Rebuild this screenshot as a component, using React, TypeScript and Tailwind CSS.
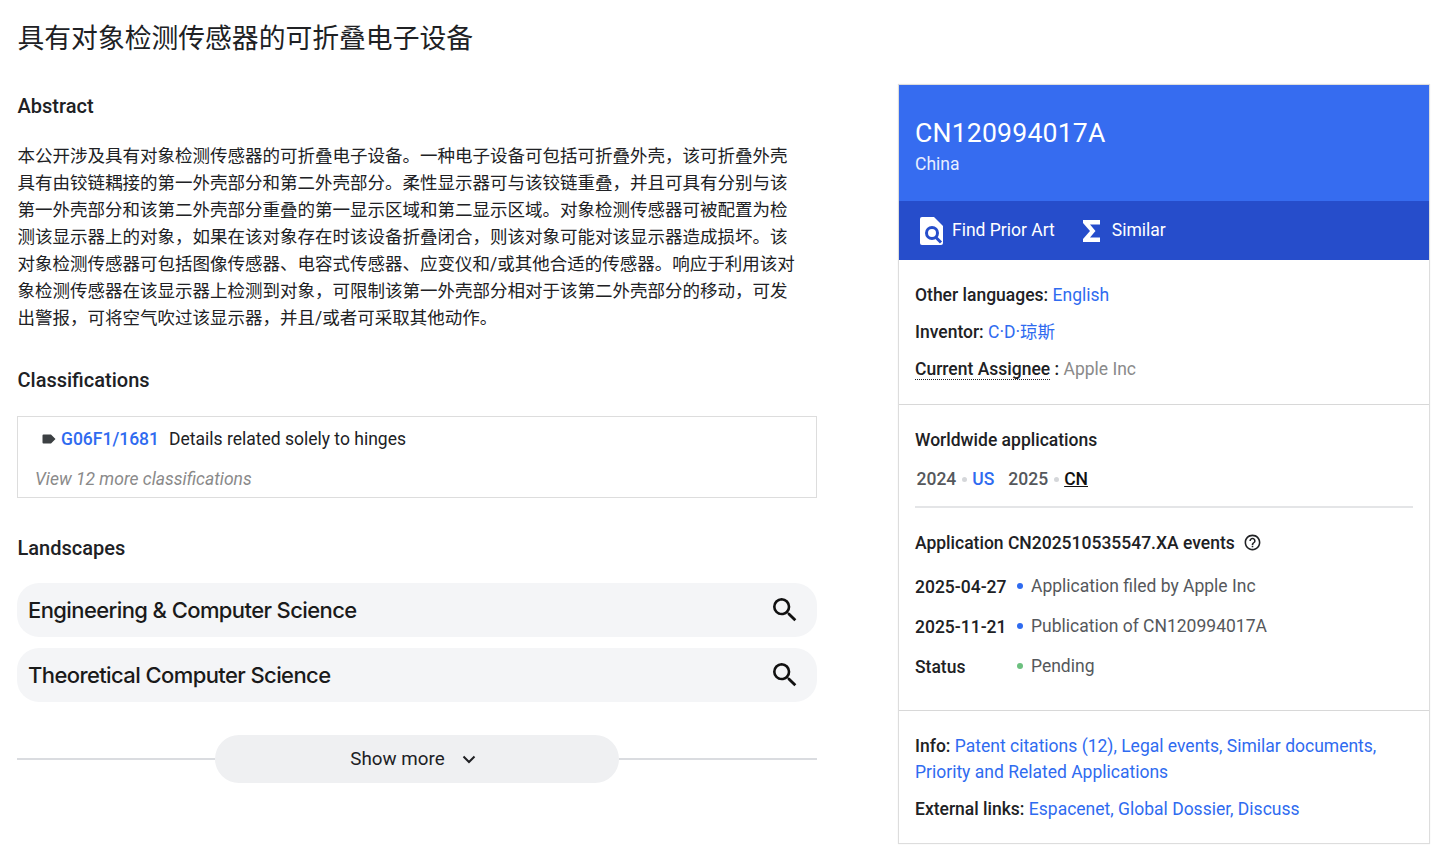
import React from "react";

const cjk = "font-['Roboto','Noto_Sans_CJK_SC',sans-serif]";
const A = ({ children }: { children: React.ReactNode }) => <a className="text-[#2f6bf0]">{children}</a>;

function Search() {
  return (
    <svg width="32" height="32" viewBox="0 0 24 24" fill="#111">
      <path d="M15.5 14h-.79l-.28-.27A6.47 6.47 0 0 0 16 9.5 6.5 6.5 0 1 0 9.5 16c1.61 0 3.09-.59 4.23-1.57l.27.28v.79l5 4.99L20.49 19l-4.99-5zm-6 0C7.01 14 5 11.99 5 9.5S7.01 5 9.5 5 14 7.01 14 9.5 11.99 14 9.5 14z" />
    </svg>
  );
}

function Landscape({ name }: { name: string }) {
  return (
    <div className="flex h-[54px] items-center justify-between rounded-[22px] bg-[#f4f5f7] pl-[11px] pr-[16px]">
      <span className="font-['Inter',sans-serif] text-[22px] font-medium tracking-[-0.6px] text-[#1a1a1a]">{name}</span>
      <Search />
    </div>
  );
}

function EventRow({ date, text, dot }: { date: string; text: string; dot: string }) {
  return (
    <div className="flex h-[40px] items-center">
      <span className="w-[102px] translate-y-[1px] text-[17.5px] font-medium text-[#202124]">{date}</span>
      <span className={`h-[6px] w-[6px] rounded-full ${dot}`} />
      <span className="ml-[8px] text-[17.5px] text-[#55585c]">{text}</span>
    </div>
  );
}

export default function App() {
  return (
    <div className={`${cjk} flex h-[856px] w-[1440px] overflow-hidden bg-white text-[#202124]`}>
      <main className="ml-[17px] w-[800px] shrink-0">
        <h1 className="mt-[19px] pl-[0.5px] text-[26.8px] leading-[40px] font-normal text-[#202124]">具有对象检测传感器的可折叠电子设备</h1>
        <h2 className="mt-[33px] pl-[0.5px] text-[20px] leading-[28px] font-medium text-[#202124]">Abstract</h2>
        <p className="mt-[23px] pl-[0.5px] text-[17.5px] leading-[27px] text-[#202124]">
          本公开涉及具有对象检测传感器的可折叠电子设备。一种电子设备可包括可折叠外壳，该可折叠外壳<br />
          具有由铰链耦接的第一外壳部分和第二外壳部分。柔性显示器可与该铰链重叠，并且可具有分别与该<br />
          第一外壳部分和该第二外壳部分重叠的第一显示区域和第二显示区域。对象检测传感器可被配置为检<br />
          测该显示器上的对象，如果在该对象存在时该设备折叠闭合，则该对象可能对该显示器造成损坏。该<br />
          对象检测传感器可包括图像传感器、电容式传感器、应变仪和/或其他合适的传感器。响应于利用该对<br />
          象检测传感器在该显示器上检测到对象，可限制该第一外壳部分相对于该第二外壳部分的移动，可发<br />
          出警报，可将空气吹过该显示器，并且/或者可采取其他动作。
        </p>
        <h2 className="mt-[34px] pl-[0.5px] text-[20px] leading-[28px] font-medium text-[#202124]">Classifications</h2>
        <section className="mt-[22px] h-[82px] border border-[#dddddd] pl-[17px]">
          <div className="mt-[9px] flex h-[26px] items-center">
            <svg width="14" height="10" viewBox="0 0 14 10" className="ml-[7px]" fill="#3c4043">
              <path d="M1.5 0.5H9L13.5 5 9 9.5H1.5A1 1 0 0 1 .5 8.5V1.5A1 1 0 0 1 1.5 .5Z" />
            </svg>
            <a className="ml-[5px] text-[17.5px] font-medium text-[#2f6bf0]">G06F1/1681</a>
            <span className="ml-[10px] text-[17.5px] text-[#202124]">Details related solely to hinges</span>
          </div>
          <div className="mt-[14px] text-[17.5px] leading-[26px] italic text-[#8a8a8a]">View 12 more classifications</div>
        </section>
        <h2 className="mt-[36px] pl-[0.5px] text-[20px] leading-[28px] font-medium text-[#202124]">Landscapes</h2>
        <div className="mt-[21px] flex flex-col gap-[11px]">
          <Landscape name="Engineering & Computer Science" />
          <Landscape name="Theoretical Computer Science" />
        </div>
        <div className="mt-[33px] flex items-center">
          <div className="h-[2px] flex-1 bg-[#dadce0]" />
          <button className="flex h-[48px] w-[404px] items-center justify-center rounded-[24px] bg-[#eff0f2] pr-[7px]">
            <span className="text-[18.8px] text-[#202124]">Show more</span>
            <svg width="16" height="16" viewBox="0 0 16 16" fill="none" stroke="#202124" strokeWidth="2" className="ml-[16px]">
              <path d="M2.5 5.5 8 11l5.5-5.5" />
            </svg>
          </button>
          <div className="h-[2px] w-[198px] bg-[#dadce0]" />
        </div>
      </main>

      <aside className="mt-[84px] ml-[81px] h-[760px] w-[532px] shrink-0 border border-[#dddddd] shadow-[0_0_1px_rgba(0,0,0,0.1)]">
        <header className="h-[116px] bg-[#366cf0] px-[16px] pt-[29px] text-white">
          <div className="text-[26.6px] leading-[38px] tracking-[0.2px]">CN120994017A</div>
          <div className="-mt-[1px] text-[17.5px] leading-[26px] text-[#e8eeff]">China</div>
        </header>
        <nav className="flex h-[59px] items-center bg-[#264dcb] pl-[21px] text-[17.5px] text-white">
          <svg width="23" height="28" viewBox="0 0 23 28">
            <path d="M2 0H14L23 9V26a2 2 0 0 1-2 2H2a2 2 0 0 1-2-2V2A2 2 0 0 1 2 0Z" fill="#fff" />
            <circle cx="12" cy="16" r="5.5" fill="none" stroke="#264dcb" strokeWidth="3" />
            <path d="M16 20.5 21 25.5" stroke="#264dcb" strokeWidth="3" />
          </svg>
          <span className="ml-[9px]">Find Prior Art</span>
          <svg width="18" height="22" viewBox="0 0 18 22" className="ml-[28px]" fill="#fff">
            <path d="M0 0H17V4.5H7L12.5 11 7 17.5H17V22H0V19L7 11 0 3Z" />
          </svg>
          <span className="ml-[11px]">Similar</span>
        </nav>

        <section className="border-b border-[#d8d8d8] px-[16px] pt-[22px] pb-[11px] text-[17.5px] leading-[26px]">
          <div className="mb-[11px] font-medium">Other languages: <A><span className="font-normal">English</span></A></div>
          <div className="mb-[11px] font-medium">Inventor: <A><span className="font-normal">C·D·琼斯</span></A></div>
          <div className="mb-[11px] font-medium">
            <span className="border-b border-dotted border-[#202124]">Current Assignee</span> : <span className="font-normal text-[#8a8a8a]">Apple Inc</span>
          </div>
        </section>

        <section className="border-b border-[#d8d8d8] px-[16px] pt-[22px] pb-[24px]">
          <div className="text-[17.5px] leading-[26px] font-medium">Worldwide applications</div>
          <div className="mt-[12px] flex h-[28px] items-center pl-[1.5px] text-[17.5px] font-medium">
            <span className="text-[#55585c]">2024</span>
            <span className="mx-[5.5px] h-[5px] w-[5px] rounded-full bg-[#d5d7da]" />
            <span className="text-[#2f6bf0]">US</span>
            <span className="ml-[14px] text-[#55585c]">2025</span>
            <span className="mx-[5.5px] h-[5px] w-[5px] rounded-full bg-[#d5d7da]" />
            <span className="text-[#111] underline">CN</span>
          </div>
          <div className="mt-[13px] h-[2px] bg-[#e4e5e7]" />
          <div className="mt-[21.5px] flex items-center text-[17.5px] leading-[26px] font-medium">
            Application CN202510535547.XA events
            <svg width="19" height="19" viewBox="0 0 24 24" fill="#202124" className="ml-[8px]">
              <path d="M11 18h2v-2h-2v2zm1-16C6.48 2 2 6.48 2 12s4.48 10 10 10 10-4.48 10-10S17.52 2 12 2zm0 18c-4.41 0-8-3.59-8-8s3.59-8 8-8 8 3.59 8 8-3.59 8-8 8zm0-14c-2.21 0-4 1.79-4 4h2c0-1.1.9-2 2-2s2 .9 2 2c0 2-3 1.75-3 5h2c0-2.25 3-2.5 3-5 0-2.21-1.79-4-4-4z" />
            </svg>
          </div>
          <div className="mt-[10.5px]">
            <EventRow date="2025-04-27" text="Application filed by Apple Inc" dot="bg-[#2f6bf0]" />
            <EventRow date="2025-11-21" text="Publication of CN120994017A" dot="bg-[#2f6bf0]" />
            <EventRow date="Status" text="Pending" dot="bg-[#6cc07f]" />
          </div>
        </section>

        <section className="px-[16px] pt-[22px] text-[17.5px] leading-[26px]">
          <div className="font-medium">
            Info: <span className="font-normal text-[#2f6bf0]">Patent citations (12), Legal events, Similar documents,<br />Priority and Related Applications</span>
          </div>
          <div className="mt-[11px] font-medium">
            External links: <span className="font-normal text-[#2f6bf0]">Espacenet, Global Dossier, Discuss</span>
          </div>
        </section>
      </aside>
    </div>
  );
}
